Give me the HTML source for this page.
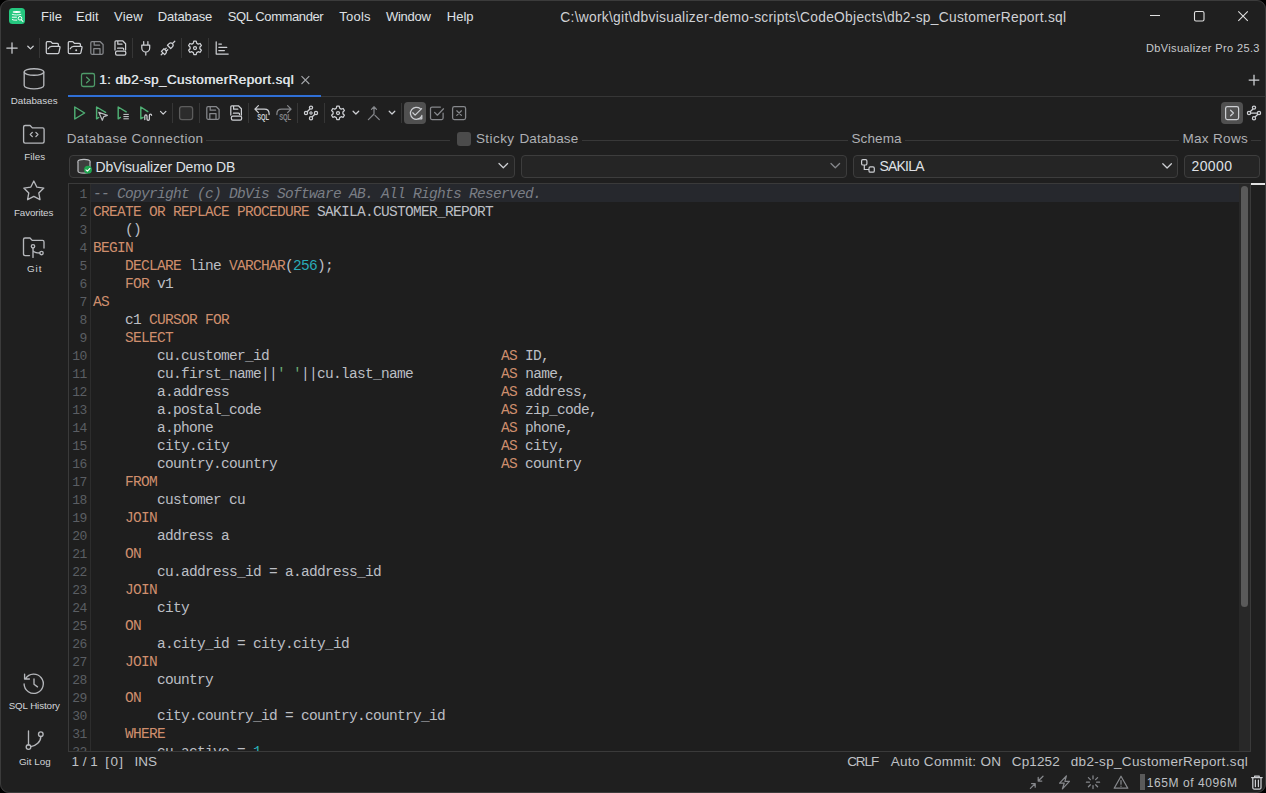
<!DOCTYPE html>
<html><head><meta charset="utf-8">
<style>
*{margin:0;padding:0;box-sizing:border-box}
html,body{width:1266px;height:793px;background:#000;overflow:hidden}
body{font-family:"Liberation Sans",sans-serif;color:#dfe1e5;position:relative}
#win{position:absolute;left:0;top:0;width:1266px;height:793px;background:#1f1f1f;border-radius:9px;overflow:hidden}
#frame{position:absolute;left:0;top:0;width:1266px;height:793px;border:1px solid #3b3b3b;border-radius:9px;pointer-events:none}
.a{position:absolute;white-space:pre}
#ico{position:absolute;left:0;top:0}
.i{fill:none;stroke:#cdcfd3;stroke-width:1.25;stroke-linecap:round;stroke-linejoin:round}
.sb{fill:none;stroke:#b5b7bb;stroke-width:1.35;stroke-linecap:round;stroke-linejoin:round}
.g{fill:none;stroke:#4faf74;stroke-width:1.45;stroke-linecap:round;stroke-linejoin:round}
.dm{stroke:#86888c}
.sep{position:absolute;width:1px;height:20px;background:#363636}
.dd{position:absolute;top:155px;height:23px;border:1px solid #3d3d3d;border-radius:4px;background:#252525}
.hl{position:absolute;left:0;width:1px;height:1px;background:#3a3a3a}
pre.code{position:absolute;left:24px;top:1px;font-family:"Liberation Mono",monospace;font-size:14.5px;letter-spacing:-0.7px;line-height:18px;color:#bcbec4}
.k{color:#cf8e6d}
.n{color:#2aacb8}
.s{color:#6aab73}
.c{color:#7a7e85;font-style:italic}
pre.ln{position:absolute;left:0px;top:2px;width:18px;font-family:"Liberation Mono",monospace;font-size:13px;letter-spacing:-0.4px;line-height:18px;color:#5b5e63;text-align:right}
</style></head><body>
<div id="win">

<!-- tab underline -->
<div class="a" style="left:321px;top:96px;width:945px;height:1px;background:#363636"></div>
<div class="a" style="left:68px;top:95px;width:253px;height:2px;background:#2f6fd6"></div>

<!-- toolbar separators -->
<div class="sep" style="left:39px;top:38px"></div>
<div class="sep" style="left:132px;top:38px"></div>
<div class="sep" style="left:181px;top:38px"></div>
<div class="sep" style="left:208px;top:38px"></div>
<div class="sep" style="left:172px;top:103px"></div>
<div class="sep" style="left:199px;top:103px"></div>
<div class="sep" style="left:248px;top:103px"></div>
<div class="sep" style="left:297px;top:103px"></div>
<div class="sep" style="left:324px;top:103px"></div>
<div class="sep" style="left:401px;top:103px"></div>
<div class="a" style="left:404px;top:102px;width:22px;height:22px;border-radius:4px;background:#505050"></div>
<div class="a" style="left:1221px;top:102px;width:22px;height:22px;border-radius:4px;background:#505050"></div>

<!-- label lines -->
<div class="a" style="left:206px;top:140px;width:244px;height:1px;background:#383838"></div>
<div class="a" style="left:582px;top:140px;width:266px;height:1px;background:#383838"></div>
<div class="a" style="left:905px;top:140px;width:274px;height:1px;background:#383838"></div>
<div class="a" style="left:1251px;top:140px;width:10px;height:1px;background:#383838"></div>
<div class="a" style="left:457px;top:132px;width:14px;height:14px;border-radius:3px;background:#4b4b4b"></div>

<!-- dropdowns -->
<div class="dd" style="left:69px;width:446px"></div>
<div class="dd" style="left:521px;width:326px"></div>
<div class="dd" style="left:853px;width:325px"></div>
<div class="dd" style="left:1184px;width:76px"></div>

<!-- editor -->
<div class="a" style="left:68px;top:183px;width:1183px;height:569px;border:1px solid #3a3a3a;background:#1e1e1e"></div>
<div class="a" style="left:90px;top:184px;width:1px;height:567px;background:#2d2d2d"></div>
<div class="a" style="left:91px;top:184px;width:1148px;height:18px;background:#26282d"></div>
<div class="a" style="left:69px;top:184px;width:1170px;height:567px;overflow:hidden">
<pre class="ln">1
2
3
4
5
6
7
8
9
10
11
12
13
14
15
16
17
18
19
20
21
22
23
24
25
26
27
28
29
30
31
32</pre>
<pre class="code"><span class="c">-- Copyright (c) DbVis Software AB. All Rights Reserved.</span>
<span class="k">CREATE OR REPLACE PROCEDURE</span> SAKILA.CUSTOMER_REPORT
    ()
<span class="k">BEGIN</span>
    <span class="k">DECLARE</span> line <span class="k">VARCHAR</span>(<span class="n">256</span>);
    <span class="k">FOR</span> v1
<span class="k">AS</span>
    c1 <span class="k">CURSOR FOR</span>
    <span class="k">SELECT</span>
        cu.customer_id                             <span class="k">AS</span> ID,
        cu.first_name||<span class="s">' '</span>||cu.last_name           <span class="k">AS</span> name,
        a.address                                  <span class="k">AS</span> address,
        a.postal_code                              <span class="k">AS</span> zip_code,
        a.phone                                    <span class="k">AS</span> phone,
        city.city                                  <span class="k">AS</span> city,
        country.country                            <span class="k">AS</span> country
<span class="k">    FROM</span>
        customer cu
<span class="k">    JOIN</span>
        address a
<span class="k">    ON</span>
        cu.address_id = a.address_id
<span class="k">    JOIN</span>
        city
<span class="k">    ON</span>
        a.city_id = city.city_id
<span class="k">    JOIN</span>
        country
<span class="k">    ON</span>
        city.country_id = country.country_id
<span class="k">    WHERE</span>
        cu.active = <span class="n">1</span></pre>
</div>
<div class="a" style="left:1239px;top:184px;width:11px;height:567px;background:#282828"></div>
<div class="a" style="left:1241px;top:186px;width:7px;height:421px;border-radius:3.5px;background:#5a5a5a"></div>
<div class="a" style="left:1251px;top:183px;width:14px;height:2px;background:#e2e2e2"></div>

<!-- memory bar -->
<div class="a" style="left:1140px;top:774px;width:5px;height:16px;background:#5a5a5a"></div>

<svg id="ico" width="1266" height="793" viewBox="0 0 1266 793">
<!-- logo -->
<rect x="9" y="8" width="16" height="16" rx="3.5" fill="#25c77f"/>
<ellipse cx="16.7" cy="12" rx="4" ry="0.9" fill="#fff"/>
<path d="M12.3 14.4c2.5 .8 6 .8 8.6 0" stroke="#e8fff2" stroke-width="1" fill="none" stroke-linecap="round"/>
<path d="M12.3 17.2h4.2M12.3 19.6c1 .6 3 .7 4.5 .5" stroke="#fff" stroke-width="1" fill="none" stroke-linecap="round"/>
<circle cx="20" cy="18.3" r="1.8" stroke="#fff" stroke-width="1" fill="none"/>
<path d="M21.3 19.7l1.6 1.8" stroke="#fff" stroke-width="1.1" stroke-linecap="round"/>

<!-- window controls -->
<path d="M1150 15.5h10" stroke="#e0e0e0" stroke-width="1.1"/>
<rect x="1194.5" y="11.5" width="9.5" height="9.5" rx="1.5" fill="none" stroke="#e0e0e0" stroke-width="1.1"/>
<path d="M1238.3 11.3l9.5 9.5M1247.8 11.3l-9.5 9.5" stroke="#e0e0e0" stroke-width="1.1"/>

<!-- main toolbar -->
<path d="M12 42.8v10.4M6.8 48h10.4" class="i" stroke-width="1.5"/>
<path d="M27.8 46.2l2.7 2.7 2.7-2.7" class="i" stroke="#a4a6aa" stroke-width="1.05"/>
<path d="M46.3 52.6V42.6c0-.6.4-1 1-1h3.1c.3 0 .6.1.8.4l1.2 1.4h5c.6 0 1 .4 1 1v1.4M46.3 52.6c0 .6.4 1 1 1h10.6c.5 0 .9-.4 1-.9l1.1-5.2c.1-.6-.3-1.1-.9-1.1h-7.4c-1.6 0-2.8 .9-3.5 2.4" class="i"/>
<path d="M68.3 52.6V42.6c0-.6.4-1 1-1h3.1c.3 0 .6.1.8.4l1.2 1.4h5c.6 0 1 .4 1 1v1.4M68.3 52.6c0 .6.4 1 1 1h10.6c.5 0 .9-.4 1-.9l1.1-5.2c.1-.6-.3-1.1-.9-1.1h-7.4c-1.6 0-2.8 .9-3.5 2.4" class="i"/>
<circle cx="76.2" cy="50.2" r="1" fill="#cdcfd3"/>
<path d="M90.8 42.9c0-.7.5-1.2 1.2-1.2h8.3l2.8 2.8v8.6c0 .7-.5 1.2-1.2 1.2H92c-.7 0-1.2-.5-1.2-1.2zM94.2 41.7v3.5h5.4M93.8 54.1v-5.6h6.2v5.6" class="i dm"/>
<path d="M115 50V41.8c0-.6.4-1 1-1h6.6l3 3V50M117.8 40.8v3.4h4.2M117.6 48.2h5.2c.5 0 .9.4.9.9v.4" class="i"/>
<rect x="115.6" y="51" width="10.2" height="4.2" rx="1.4" class="i"/>
<path d="M143.7 41.5v3.5M147.9 41.5v3.5M141.8 45h7.9v3c0 2.3-1.7 4.1-3.9 4.1s-4-1.8-4-4.1zM145.8 52.1v3" class="i"/>
<g transform="translate(168 48) rotate(-45)"><path d="M-9.6 0h2.6M-7 -2.3h3.6v2.3c0 1.3-1 2.3-2.3 2.3h-1.3zM-3.4 -1.1h2M-3.4 1.1h2M1.5 -2.3h2.4c1.3 0 2.3 1 2.3 2.3s-1 2.3-2.3 2.3H1.5zM6.2 0h3.4" class="i" stroke-width="1.2"/></g>
<path d="M193.8 41.2h2.4l.5 2 1.5.9 2-.6 1.2 2.1-1.5 1.4v1.8l1.5 1.4-1.2 2.1-2-.6-1.5.9-.5 2h-2.4l-.5-2-1.5-.9-2 .6-1.2-2.1 1.5-1.4V47l-1.5-1.4 1.2-2.1 2 .6 1.5-.9z" class="i"/>
<circle cx="195" cy="48" r="1.5" class="i"/>
<path d="M216.2 41.8v12.2h12" class="i" stroke="#a8aaae" stroke-width="1.4"/>
<path d="M218.8 44h2.6M218.8 47.3h8M218.8 50.6h5.6" class="i" stroke="#a8aaae" stroke-width="1.3"/>

<!-- sidebar -->
<ellipse cx="34" cy="72" rx="9.8" ry="3.3" class="sb"/>
<path d="M24.2 72v13.4c0 1.9 4.4 3.4 9.8 3.4s9.8-1.5 9.8-3.4V72" class="sb"/>
<path d="M23.6 141.6V127c0-.9.7-1.5 1.5-1.5h5l2.2 2.4h10.3c.9 0 1.5.7 1.5 1.5v12.2c0 .9-.7 1.5-1.5 1.5H25.1c-.9 0-1.5-.7-1.5-1.5z" class="sb"/>
<path d="M32.3 132.4l-2 2.1 2 2.1M35.9 132.4l2 2.1-2 2.1" class="sb" stroke-width="1.2"/>
<path d="M33.8 181l3.1 6.2 6.9.9-5 4.8 1.2 6.8-6.2-3.3-6.2 3.3 1.2-6.8-5-4.8 6.9-.9z" class="sb"/>
<path d="M29.5 255.6h-4.5c-.9 0-1.5-.7-1.5-1.5v-14.6c0-.9.7-1.5 1.5-1.5h5l2.2 2.4h10.3c.9 0 1.5.7 1.5 1.5v6.2" class="sb"/>
<circle cx="33" cy="246.3" r="1.7" class="sb"/>
<circle cx="41.5" cy="253" r="1.7" class="sb"/>
<path d="M33 248v9.4M33 250.5c1 2 3.5 2.5 6.8 2.5" class="sb"/>
<path d="M25.6 678.6a9.6 9.6 0 1 1-1.5 5.4M24.6 674.2v4.8h4.8M34 679v5.3l3.5 2.6" class="sb"/>
<path d="M28.5 731v14" class="sb"/>
<circle cx="28.5" cy="747" r="2.3" class="sb"/>
<circle cx="40.8" cy="734.2" r="2.3" class="sb"/>
<path d="M30.8 746.6c5.2-.6 10-4.8 10-10.1" class="sb"/>

<!-- tab -->
<rect x="81.5" y="73.5" width="13" height="13" rx="1.8" fill="none" stroke="#4e9a69" stroke-width="1.3"/>
<path d="M86.6 77.2l3 2.8-3 2.8" fill="none" stroke="#4e9a69" stroke-width="1.3" stroke-linecap="round" stroke-linejoin="round"/>
<path d="M301.5 76.2l7.8 7.8M309.3 76.2l-7.8 7.8" stroke="#a5a7ab" stroke-width="1.1"/>
<path d="M1254 74.8v10.6M1248.7 80.1h10.6" stroke="#cdcfd3" stroke-width="1.3"/>

<!-- editor toolbar -->
<path d="M74.8 107v12l9.8-6z" class="g"/>
<path d="M96.6 118.8V107l9 5.3M96.6 118.8l2.1-1.3" class="g"/>
<path d="M98.8 112.3l8.6 3.1-3.6 1.2-1.5 3.7z" fill="#1f1f1f" stroke="#b8babe" stroke-width="1.2" stroke-linejoin="round"/>
<path d="M118.2 118.8V107l8 4.8M118.2 118.8l2.2-1.4" class="g"/>
<path d="M123.4 114.4h5.4M123.4 116.6h5.4M123.4 118.8h5.4" stroke="#cdcfd3" stroke-width="1"/>
<path d="M140.8 118.8V107l7 4.6M140.8 118.8l2.3-1.5" class="g"/>
<path d="M144.8 119.6v-3.3c0-1.8 2.2-1.8 2.2 0v2.6c0 1.8 2.4 1.8 2.4 0v-3.6c0-1.6 2.2-1.6 2.2 0" class="i" stroke="#b8babe" stroke-width="1.2"/>
<path d="M160.5 111.4l2.7 2.7 2.7-2.7" class="i" stroke="#a4a6aa" stroke-width="1.05"/>
<rect x="179.6" y="106.6" width="13" height="13" rx="2.3" fill="#2c2c2c" stroke="#5c5c5c" stroke-width="1.3"/>
<path d="M206.8 107.9c0-.7.5-1.2 1.2-1.2h8.3l2.8 2.8v8.6c0 .7-.5 1.2-1.2 1.2H208c-.7 0-1.2-.5-1.2-1.2zM210.2 106.7v3.5h5.4M209.8 119.1v-5.6h6.2v5.6" class="i dm"/>
<path d="M230.8 115V106.8c0-.6.4-1 1-1h6.6l3 3V115M233.6 105.8v3.4h4.2M233.4 113.2h5.2c.5 0 .9.4.9.9v.4" class="i"/>
<rect x="231.4" y="116" width="10.2" height="4.2" rx="1.4" class="i"/>
<path d="M258.4 105.6l-3.5 3.5 3.5 3.5M255 109.1h9.5c2.8 0 4.6 1.6 4.6 4.6v.8" class="i" stroke-width="1.3"/>
<text x="257.2" y="120.3" font-family="Liberation Sans" font-size="8.6" font-weight="bold" fill="#cdcfd3" textLength="12" lengthAdjust="spacingAndGlyphs">SQL</text>
<path d="M287.6 105.6l3.5 3.5-3.5 3.5M291 109.1h-9.5c-2.8 0-4.6 1.6-4.6 4.6v.8" class="i dm" stroke-width="1.3"/>
<text x="279.2" y="120.3" font-family="Liberation Sans" font-size="8.6" font-weight="bold" fill="#86888c" textLength="12" lengthAdjust="spacingAndGlyphs">SQL</text>
<circle cx="311" cy="107.6" r="1.6" class="i"/>
<circle cx="306" cy="113" r="1.6" class="i"/>
<circle cx="316" cy="113" r="1.6" class="i"/>
<circle cx="311" cy="118.2" r="1.6" class="i"/>
<path d="M311 110.8l2.2 2.2-2.2 2.2-2.2-2.2z" fill="#a0a2a6"/>
<path d="M309.7 109.2l-2.3 2.3M312.3 116.8l2.3-2.3" class="i" stroke-width="1.1"/>
<path d="M336.8 106.2h2.4l.5 2 1.5.9 2-.6 1.2 2.1-1.5 1.4v1.8l1.5 1.4-1.2 2.1-2-.6-1.5.9-.5 2h-2.4l-.5-2-1.5-.9-2 .6-1.2-2.1 1.5-1.4V112l-1.5-1.4 1.2-2.1 2 .6 1.5-.9z" class="i"/>
<circle cx="338" cy="113" r="1.5" class="i"/>
<path d="M353.1 111.2l2.8 2.8 2.8-2.8" class="i" stroke="#a4a6aa" stroke-width="1.05"/>
<path d="M374 107v7l-5.6 5.6M375 115.4l4.3 4.2M371.5 109.4l2.5-2.6 2.5 2.6" class="i dm" stroke="#9c9ea2" stroke-width="1.35"/>
<path d="M389.2 111.2l2.8 2.8 2.8-2.8" class="i" stroke="#a4a6aa" stroke-width="1.05"/>
<path d="M420.2 108.6a6 6 0 1 0 1.2 8" class="i" stroke="#d4d6da" stroke-width="1.3"/>
<path d="M412.8 112.8l2.3 2.3 6.5-6.5M418.2 118.8h3.6v-3.4" class="i" stroke="#d4d6da" stroke-width="1.3"/>
<path d="M443.1 113.2v4.9c0 .9-.7 1.5-1.5 1.5h-9.6c-.9 0-1.5-.7-1.5-1.5v-9.6c0-.9.7-1.5 1.5-1.5h8.4M434.6 112.4l2.8 2.8 6.1-6.4" class="i dm" stroke-width="1.3"/>
<rect x="452.6" y="106.6" width="13" height="13" rx="1.8" class="i dm" stroke-width="1.3"/>
<path d="M456.8 110.8l4.6 4.6M461.4 110.8l-4.6 4.6" class="i dm" stroke-width="1.2"/>
<rect x="1225.6" y="106.6" width="13" height="13" rx="1.8" class="i" stroke="#c8cacd" stroke-width="1.3"/>
<path d="M1230.6 110.2l2.8 2.8-2.8 2.8" class="i" stroke="#c8cacd" stroke-width="1.3"/>
<circle cx="1254" cy="107.6" r="1.6" class="i"/>
<circle cx="1249" cy="113" r="1.6" class="i"/>
<circle cx="1259" cy="113" r="1.6" class="i"/>
<circle cx="1254" cy="118.2" r="1.6" class="i"/>
<path d="M1252.7 109.2l-2.3 2.3M1255.3 116.8l2.3-2.3" class="i" stroke-width="1.1"/><path d="M1250.6 113h6.8" class="i" stroke="#9a9ca0" stroke-width="1.6"/>

<!-- dropdown icons -->
<ellipse cx="84" cy="161.5" rx="6" ry="2.2" fill="#3e3e3e" stroke="#bcbec2" stroke-width="1.2"/>
<path d="M78 161.5v9.5c0 1.2 2.7 2.2 6 2.2s6-1 6-2.2v-9.5" fill="#3e3e3e" stroke="#bcbec2" stroke-width="1.2"/>
<circle cx="88" cy="169.7" r="3.9" fill="#1fa650"/>
<path d="M86 169.8l1.4 1.3 2.5-2.6" fill="none" stroke="#fff" stroke-width="1.1" stroke-linecap="round" stroke-linejoin="round"/>
<path d="M499 163.5l4.3 4.3 4.3-4.3" class="i" stroke-width="1.3"/>
<path d="M831 163.5l4.3 4.3 4.3-4.3" class="i dm" stroke-width="1.3"/>
<rect x="861.6" y="159.7" width="5.3" height="5.3" rx="1.3" fill="none" stroke="#cdcfd3" stroke-width="1.2"/>
<rect x="869" y="166.9" width="5.3" height="5.3" rx="1.3" fill="none" stroke="#cdcfd3" stroke-width="1.2"/>
<path d="M864.3 165v4.5h4.7" fill="none" stroke="#cdcfd3" stroke-width="1.2"/>
<path d="M1162.8 163.7l4.3 4.3 4.3-4.3" class="i" stroke-width="1.3"/>

<!-- status icons -->
<path d="M1043 776.2l-4.8 4.8M1038.2 777.4v3.6h3.6M1030.4 788.4l4.8-4.8M1031.6 783.6h3.6v3.6" class="i dm" stroke-width="1.2"/>
<path d="M1066.4 775.8l-6.8 7.4h4.6l-1.8 5.7 7-7.6h-4.5z" class="i dm" stroke-width="1.2"/>
<path d="M1093 775.8v3M1093 785.6v3M1086.4 782.2h3M1096.6 782.2h3M1088.4 777.6l2 2M1095.6 784.8l2 2M1088.4 786.8l2-2M1095.6 779.6l2-2" class="i dm" stroke-width="1.2"/>
<path d="M1121 776.2l6.8 12H1114.2z" class="i dm" stroke-width="1.2"/>
<path d="M1121 780.6v3.6M1121 786v.3" class="i dm" stroke-width="1.3"/>
<path d="M1251.6 777.6h10.6M1254.6 777.6v-1.6h4.6v1.6M1252.8 777.6v10.2c0 .7.5 1.2 1.2 1.2h5.8c.7 0 1.2-.5 1.2-1.2v-10.2M1255.4 780v6.6M1258.4 780v6.6" class="i" stroke-width="1.2"/>
</svg>

<div class="a" style="left:41.00px;top:9.01px;font-size:13px;line-height:16px;font-weight:400;color:#dfe1e5;letter-spacing:0.000px;">File</div>
<div class="a" style="left:75.90px;top:9.01px;font-size:13px;line-height:16px;font-weight:400;color:#dfe1e5;letter-spacing:0.067px;">Edit</div>
<div class="a" style="left:114.00px;top:9.01px;font-size:13px;line-height:16px;font-weight:400;color:#dfe1e5;letter-spacing:0.200px;">View</div>
<div class="a" style="left:157.70px;top:9.01px;font-size:13px;line-height:16px;font-weight:400;color:#dfe1e5;letter-spacing:-0.143px;">Database</div>
<div class="a" style="left:227.80px;top:9.01px;font-size:13px;line-height:16px;font-weight:400;color:#dfe1e5;letter-spacing:-0.400px;">SQL Commander</div>
<div class="a" style="left:339.20px;top:9.01px;font-size:13px;line-height:16px;font-weight:400;color:#dfe1e5;letter-spacing:0.250px;">Tools</div>
<div class="a" style="left:386.00px;top:9.01px;font-size:13px;line-height:16px;font-weight:400;color:#dfe1e5;letter-spacing:-0.280px;">Window</div>
<div class="a" style="left:446.80px;top:9.01px;font-size:13px;line-height:16px;font-weight:400;color:#dfe1e5;letter-spacing:0.000px;">Help</div>
<div class="a" style="left:560.30px;top:9.39px;font-size:13.8px;line-height:17px;font-weight:400;color:#cfd1d5;letter-spacing:0.276px;">C:\work\git\dbvisualizer-demo-scripts\CodeObjects\db2-sp_CustomerReport.sql</div>
<div class="a" style="left:1145.90px;top:41.15px;font-size:11px;line-height:14px;font-weight:400;color:#c8cacd;letter-spacing:0.370px;">DbVisualizer Pro 25.3</div>
<div class="a" style="left:99.00px;top:71.28px;font-size:13.5px;line-height:17px;font-weight:400;color:#dfe1e5;letter-spacing:0.393px;text-shadow:0.45px 0 0 #dfe1e5">1: db2-sp_CustomerReport.sql</div>
<div class="a" style="left:66.70px;top:130.48px;font-size:13.5px;line-height:17px;font-weight:400;color:#aeb0b4;letter-spacing:0.367px;">Database Connection</div>
<div class="a" style="left:475.90px;top:130.48px;font-size:13.5px;line-height:17px;font-weight:400;color:#aeb0b4;letter-spacing:0.440px;">Sticky</div>
<div class="a" style="left:519.40px;top:130.48px;font-size:13.5px;line-height:17px;font-weight:400;color:#aeb0b4;letter-spacing:0.143px;">Database</div>
<div class="a" style="left:851.40px;top:130.48px;font-size:13.5px;line-height:17px;font-weight:400;color:#aeb0b4;letter-spacing:0.120px;">Schema</div>
<div class="a" style="left:1182.40px;top:130.48px;font-size:13.5px;line-height:17px;font-weight:400;color:#aeb0b4;letter-spacing:0.343px;">Max Rows</div>
<div class="a" style="left:95.50px;top:157.78px;font-size:14px;line-height:18px;font-weight:400;color:#dfe1e5;letter-spacing:-0.158px;">DbVisualizer Demo DB</div>
<div class="a" style="left:879.50px;top:156.78px;font-size:14px;line-height:18px;font-weight:400;color:#dfe1e5;letter-spacing:-0.800px;">SAKILA</div>
<div class="a" style="left:1191.40px;top:156.78px;font-size:14px;line-height:18px;font-weight:400;color:#dfe1e5;letter-spacing:0.450px;">20000</div>
<div class="a" style="left:71.50px;top:753.30px;font-size:13.5px;line-height:17px;font-weight:400;color:#bfc1c5;letter-spacing:0.000px;">1 / 1</div>
<div class="a" style="left:105.30px;top:753.30px;font-size:13.5px;line-height:17px;font-weight:400;color:#bfc1c5;letter-spacing:1.400px;">[0]</div>
<div class="a" style="left:134.40px;top:753.30px;font-size:13.5px;line-height:17px;font-weight:400;color:#bfc1c5;letter-spacing:0.100px;">INS</div>
<div class="a" style="left:847.20px;top:753.30px;font-size:13.5px;line-height:17px;font-weight:400;color:#bfc1c5;letter-spacing:-1.067px;">CRLF</div>
<div class="a" style="left:890.70px;top:753.30px;font-size:13.5px;line-height:17px;font-weight:400;color:#bfc1c5;letter-spacing:0.329px;">Auto Commit: ON</div>
<div class="a" style="left:1011.80px;top:753.30px;font-size:13.5px;line-height:17px;font-weight:400;color:#bfc1c5;letter-spacing:0.120px;">Cp1252</div>
<div class="a" style="left:1070.70px;top:753.30px;font-size:13.5px;line-height:17px;font-weight:400;color:#bfc1c5;letter-spacing:0.342px;">db2-sp_CustomerReport.sql</div>
<div class="a" style="left:1146.70px;top:776.04px;font-size:12px;line-height:15px;font-weight:400;color:#bfc1c5;letter-spacing:0.583px;">165M of 4096M</div>
<div class="a" style="left:10.70px;top:95.45px;font-size:9.8px;line-height:12px;font-weight:400;color:#d2d4d8;letter-spacing:0.000px;">Databases</div>
<div class="a" style="left:24.20px;top:150.75px;font-size:9.8px;line-height:12px;font-weight:400;color:#d2d4d8;letter-spacing:0.050px;">Files</div>
<div class="a" style="left:14.00px;top:206.75px;font-size:9.8px;line-height:12px;font-weight:400;color:#d2d4d8;letter-spacing:-0.125px;">Favorites</div>
<div class="a" style="left:27.10px;top:262.75px;font-size:9.8px;line-height:12px;font-weight:400;color:#d2d4d8;letter-spacing:0.900px;">Git</div>
<div class="a" style="left:8.70px;top:699.75px;font-size:9.8px;line-height:12px;font-weight:400;color:#d2d4d8;letter-spacing:-0.120px;">SQL History</div>
<div class="a" style="left:19.00px;top:755.95px;font-size:9.8px;line-height:12px;font-weight:400;color:#d2d4d8;letter-spacing:0.000px;">Git Log</div>
</div>
<div id="frame"></div>
</body></html>
